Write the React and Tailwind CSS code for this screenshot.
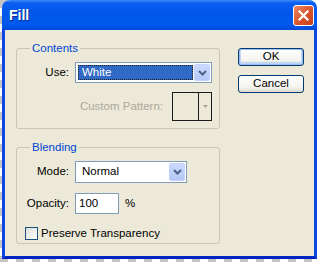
import React from "react";

function Chevron({ color = "#4d6185" }) {
  return (
    <svg width="9" height="6" viewBox="0 0 9 6">
      <path d="M1 1 L4.5 4.5 L8 1" fill="none" stroke={color} strokeWidth="2" />
    </svg>
  );
}

function DropButton() {
  return (
    <div className="flex w-[16px] items-center justify-center rounded-[2px] border border-[#c3d3fd] bg-[linear-gradient(to_bottom,#cbdafd,#b4c8f6)]">
      <Chevron />
    </div>
  );
}

function GroupBox({ title, className, children }) {
  return (
    <div className={"relative w-[204px] rounded-[3px] border border-[#c9c6b6] " + className}>
      <span className="absolute -top-[8px] left-[13px] bg-[#ece9d8] px-[2px] leading-[14px] text-[#0046d5]">
        {title}
      </span>
      {children}
    </div>
  );
}

function XpButton({ label, primary }) {
  return (
    <button
      className={
        "h-[18px] w-[66px] rounded-[3px] border border-[#003c74] bg-[linear-gradient(to_bottom,#ffffff,#f4f3ee_70%,#dcdad0)] leading-none text-black " +
        (primary ? "shadow-[inset_0_0_0_1px_#9dbcf0,inset_0_-1px_0_2px_#c0d6f7]" : "")
      }
    >
      {label}
    </button>
  );
}

export default function App() {
  return (
    <div className="h-[262px] w-[317px] bg-[repeating-conic-gradient(#fff_0%_25%,#c4c4c4_0%_50%)] bg-[length:16px_16px] font-['Liberation_Sans',Arial,sans-serif] text-[11.5px]">
      <div className="ml-[2px] flex h-[259px] w-[315px] flex-col overflow-hidden rounded-t-[8px]">
        {/* title bar */}
        <div className="flex h-[30px] items-center justify-between bg-[linear-gradient(to_bottom,#3d8cf8_0%,#0a5ff2_10%,#0056e8_45%,#0059ee_80%,#0049da_100%)] pl-[7px] pr-[3px]">
          <span className="text-[14px] font-bold text-white [text-shadow:1px_1px_0_#0b2a8f]">Fill</span>
          <div className="flex h-[21px] w-[21px] items-center justify-center rounded-[3px] border border-white bg-[linear-gradient(135deg,#ee8a66,#d8532b_55%,#c2401a)]">
            <svg width="11" height="11" viewBox="0 0 11 11">
              <path d="M1.5 1.5 L9.5 9.5 M9.5 1.5 L1.5 9.5" stroke="#fff" strokeWidth="2.2" strokeLinecap="square" />
            </svg>
          </div>
        </div>

        {/* body */}
        <div className="flex flex-1 border-x-[3px] border-b-[3px] border-x-[#0b45e2] border-b-[#0026c2] bg-[#ece9d8] pl-[11px] pt-[18px]">
          <div className="flex flex-col">
            <GroupBox title="Contents" className="h-[81px] pt-[13px]">
              <div className="flex items-center">
                <span className="w-[52px] text-right text-black">Use:</span>
                <div className="ml-[6px] flex h-[21px] w-[137px] border border-[#7f9db9] bg-white p-[1px]">
                  <div className="m-[1px] flex flex-1 items-center border border-dotted border-[#222] bg-[#316ac5] pl-[3px] text-white">
                    White
                  </div>
                  <DropButton />
                </div>
              </div>
              <div className="mt-[9px] flex items-center justify-end pr-[7px]">
                <span className="text-[#aca899]">Custom Pattern:</span>
                <div className="ml-[9px] flex h-[29px] w-[40px] border border-[#1a1a1a]">
                  <div className="flex-1 border-r border-[#1a1a1a]" />
                  <div className="flex w-[12px] items-center justify-center">
                    <svg width="5" height="3" viewBox="0 0 5 3">
                      <path d="M0 0 H5 L2.5 3 Z" fill="#a8a698" />
                    </svg>
                  </div>
                </div>
              </div>
            </GroupBox>

            <GroupBox title="Blending" className="mt-[18px] h-[97px] pt-[13px]">
              <div className="flex items-center">
                <span className="w-[52px] text-right text-black">Mode:</span>
                <div className="ml-[6px] flex h-[22px] w-[112px] border border-[#7f9db9] bg-white p-[1px]">
                  <div className="flex flex-1 items-center pl-[5px] text-black">Normal</div>
                  <DropButton />
                </div>
              </div>
              <div className="mt-[10px] flex items-center">
                <span className="w-[52px] text-right text-black">Opacity:</span>
                <div className="ml-[6px] flex h-[21px] w-[44px] items-center border border-[#7f9db9] bg-white pl-[3px] text-black">
                  100
                </div>
                <span className="ml-[6px] text-black">%</span>
              </div>
              <div className="mt-[11px] flex items-center pl-[8px]">
                <div className="h-[13px] w-[13px] border border-[#1c5180] bg-[linear-gradient(135deg,#dcdcd7,#ffffff)]" />
                <span className="ml-[3px] text-black">Preserve Transparency</span>
              </div>
            </GroupBox>
          </div>

          <div className="ml-[18px] flex flex-col gap-[9px]">
            <XpButton label="OK" primary />
            <XpButton label="Cancel" />
          </div>
        </div>
      </div>
    </div>
  );
}
